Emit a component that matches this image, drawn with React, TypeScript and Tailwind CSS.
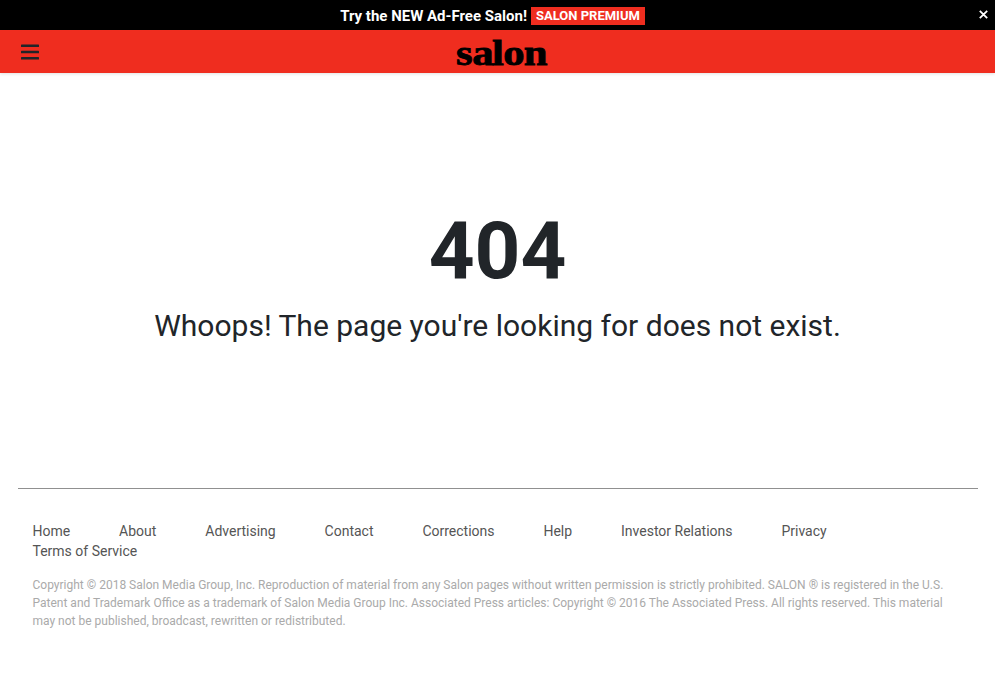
const links = ['Home', 'About', 'Advertising', 'Contact', 'Corrections', 'Help', 'Investor Relations', 'Privacy', 'Terms of Service'];

function Logo() {
  return (
    <svg width="96" height="43" viewBox="0 0 96 43" className="block overflow-visible" aria-label="salon">
      <text
        transform="translate(2 34.6) scale(1.17 1)"
        x="0 13.9 30.8 40.4 58"
        y="0"
        fontSize="36.5"
        fontWeight="700"
        fontFamily="'Liberation Serif', serif"
        fill="#000"
        stroke="#000"
        strokeWidth="0.8"
      >
        salon
      </text>
    </svg>
  );
}

export default function App() {
  return (
    <div className="min-h-screen bg-white font-['Roboto',sans-serif] text-[#212529]">
      <div className="grid h-[30px] grid-cols-[1fr_auto_1fr] items-center bg-black text-white">
        <span />
        <div className="mr-[10px] flex items-center gap-1 pt-px whitespace-nowrap">
          <span className="text-[15px] leading-[18px] font-bold">Try the NEW Ad-Free Salon!</span>
          <span className="h-[18px] bg-[#ef2d1f] px-[5px] text-[13px] leading-[18px] font-bold">SALON PREMIUM</span>
        </div>
        <button className="mr-[7px] justify-self-end" aria-label="Close">
          <svg width="9" height="9" viewBox="0 0 9 9" className="-mt-px block">
            <path d="M.8.8l7.4 7.4M8.2.8L.8 8.2" stroke="#fff" strokeWidth="1.8" />
          </svg>
        </button>
      </div>
      <header className="grid h-[43px] grid-cols-[1fr_auto_1fr] items-center bg-[#ef2d1f] shadow-[0_1px_3px_rgba(0,0,0,0.12)]">
        <button className="ml-[21px] w-[18px]" aria-label="Menu">
          <svg width="18" height="17" viewBox="0 0 18 17" className="block" fill="#212529">
            <rect x="0" y="1.5" width="18" height="2.5" rx="0.6" />
            <rect x="0" y="7.75" width="18" height="2.5" rx="0.6" />
            <rect x="0" y="14" width="18" height="2.5" rx="0.6" />
          </svg>
        </button>
        <div className="ml-[9px]">
          <Logo />
        </div>
        <span />
      </header>
      <main className="flex h-[415px] flex-col items-center pt-[130px] text-center">
        <h1 className="text-[80px] leading-[96px] font-bold">404</h1>
        <p className="mt-[9px] text-[30px] leading-[36px] whitespace-nowrap">
          Whoops! The page you're looking for does not exist.
        </p>
      </main>
      <footer className="mr-[17px] ml-[18px] border-t border-[#909090] pt-8 pl-[14.5px]">
        <ul className="flex flex-wrap gap-x-[48.9px] text-[14px] leading-5 text-[#555]">
          {links.map((l) => (
            <li key={l}>{l}</li>
          ))}
        </ul>
        <p className="mt-[15px] text-[12px] leading-[18px] whitespace-nowrap text-[#aaa]">
          Copyright © 2018 Salon Media Group, Inc. Reproduction of material from any Salon pages without written permission is strictly prohibited. SALON ® is registered in the U.S.
          <br />
          Patent and Trademark Office as a trademark of Salon Media Group Inc. Associated Press articles: Copyright © 2016 The Associated Press. All rights reserved. This material
          <br />
          may not be published, broadcast, rewritten or redistributed.
        </p>
      </footer>
    </div>
  );
}
